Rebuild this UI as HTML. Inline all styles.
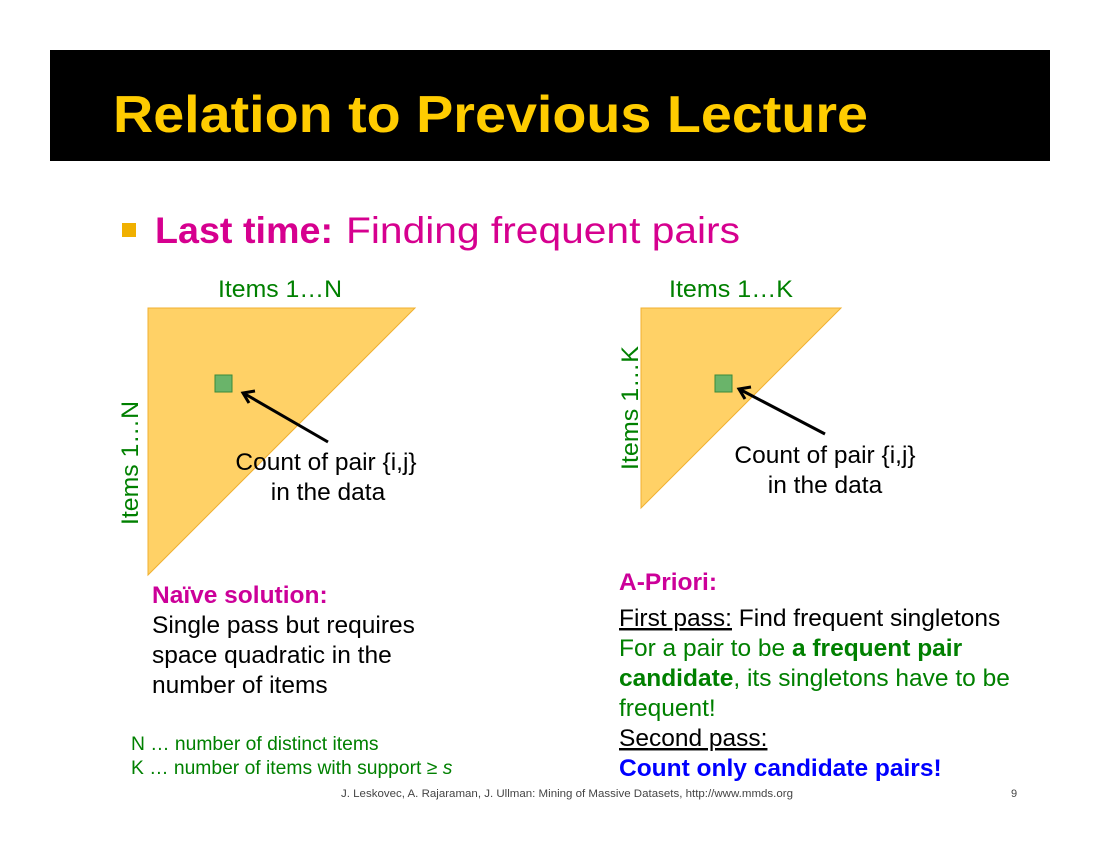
<!DOCTYPE html>
<html><head><meta charset="utf-8"><style>
html,body{margin:0;padding:0;background:#fff;width:1100px;height:850px;overflow:hidden}
svg{display:block}
text{font-family:"Liberation Sans",Arial,sans-serif}
</style></head><body>
<svg width="1100" height="850" viewBox="0 0 1100 850" xmlns="http://www.w3.org/2000/svg">
<rect x="50" y="50" width="1000" height="111" fill="#000"/>
<text x="113" y="132" font-size="52" font-weight="bold" fill="#ffcc00" textLength="755" lengthAdjust="spacingAndGlyphs">Relation to Previous Lecture</text>
<rect x="122" y="223" width="14" height="14" fill="#f0b000"/>
<text x="155" y="243" font-size="37" font-weight="bold" fill="#d6008f" textLength="178" lengthAdjust="spacingAndGlyphs">Last time:</text>
<text x="346" y="243" font-size="37" fill="#d6008f" textLength="394" lengthAdjust="spacingAndGlyphs">Finding frequent pairs</text>

<polygon points="148,308 415,308 148,575" fill="#ffd166" stroke="#f0b030" stroke-width="1"/>
<polygon points="641,308 841,308 641,508" fill="#ffd166" stroke="#f0b030" stroke-width="1"/>
<rect x="215" y="375" width="17" height="17" fill="#6ab46a" stroke="#3a8a3a"/>
<rect x="715" y="375" width="17" height="17" fill="#6ab46a" stroke="#3a8a3a"/>
<g stroke="#000" stroke-width="3" fill="none">
<line x1="328" y1="442" x2="245" y2="394"/><polyline points="255,391 243,393 249,403"/>
<line x1="825" y1="434" x2="741" y2="390"/><polyline points="751,387 739,389 745,399"/>
</g>
<g font-size="24.5" fill="#008000">
<text x="218" y="297" textLength="124" lengthAdjust="spacingAndGlyphs">Items 1…N</text>
<text x="669" y="297" textLength="124" lengthAdjust="spacingAndGlyphs">Items 1…K</text>
<text transform="translate(138,525) rotate(-90)" textLength="124" lengthAdjust="spacingAndGlyphs">Items 1…N</text>
<text transform="translate(638,470) rotate(-90)" textLength="124" lengthAdjust="spacingAndGlyphs">Items 1…K</text>
</g>
<g font-size="24.5" fill="#000" text-anchor="middle">
<text x="326" y="470">Count of pair {i,j}</text>
<text x="328" y="500">in the data</text>
<text x="825" y="463">Count of pair {i,j}</text>
<text x="825" y="493">in the data</text>
</g>
<g font-size="24.5">
<text x="152" y="603" font-weight="bold" fill="#cc0099">Naïve solution:</text>
<text x="152" y="633">Single pass but requires</text>
<text x="152" y="663">space quadratic in the</text>
<text x="152" y="693">number of items</text>

<text x="619" y="590" font-weight="bold" fill="#cc0099">A-Priori:</text>
<text x="619" y="626"><tspan text-decoration="underline">First pass:</tspan> Find frequent singletons</text>
<text x="619" y="656" fill="#008000">For a pair to be <tspan font-weight="bold">a frequent pair</tspan></text>
<text x="619" y="686" fill="#008000"><tspan font-weight="bold">candidate</tspan>, its singletons have to be</text>
<text x="619" y="716" fill="#008000">frequent!</text>
<text x="619" y="746" text-decoration="underline">Second pass:</text>
<text x="619" y="776" font-weight="bold" fill="#0000ff">Count only candidate pairs!</text>
</g>
<g font-size="19.3" fill="#008000">
<text x="131" y="750">N … number of distinct items</text>
<text x="131" y="774">K … number of items with support ≥ <tspan font-style="italic">s</tspan></text>
</g>
<text x="567" y="797" font-size="11" fill="#444" text-anchor="middle" textLength="452" lengthAdjust="spacingAndGlyphs">J. Leskovec, A. Rajaraman, J. Ullman: Mining of Massive Datasets, http://www.mmds.org</text>
<text x="1011" y="797" font-size="11" fill="#444">9</text>
</svg>
</body></html>
